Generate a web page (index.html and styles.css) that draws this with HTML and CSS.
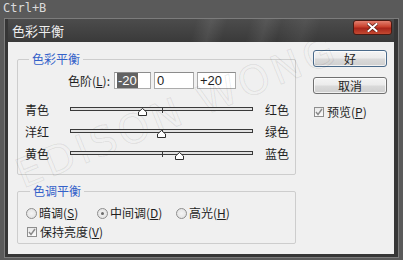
FILE: index.html
```html
<!DOCTYPE html>
<html>
<head>
    <title>色彩平衡</title>
    <link rel="stylesheet" href="styles.css">
</head>
<body>
    <div class="hotkey">Ctrl+B</div>

    <div class="dialog">
        <div class="titlebar">
            <span class="title">色彩平衡</span>
            <span class="close">
                <svg width="11" height="9" viewBox="0 0 11 9">
                    <path d="M1.5 1 L9.5 8 M9.5 1 L1.5 8" stroke="#5a1c12" stroke-width="3.4" stroke-linecap="square"/>
                    <path d="M1.5 1 L9.5 8 M9.5 1 L1.5 8" stroke="#ffffff" stroke-width="2" stroke-linecap="square"/>
                </svg>
            </span>
        </div>

        <div class="client">
            <div class="watermark">EDISON WONG</div>

            <div class="main">
                <fieldset class="group balance">
                    <legend>色彩平衡</legend>
                    <div class="levels">
                        <span class="levels-label">色阶(<u>L</u>):</span>
                        <span class="field field-a"><span class="sel">-20</span></span>
                        <span class="field field-b">0</span>
                        <span class="field field-c">+20</span>
                    </div>

                    <div class="slider-row">
                        <span class="from">青色</span>
                        <div class="track">
                            <span class="tick"></span>
                            <svg class="thumb" style="left: 40%" width="9" height="8" viewBox="0 0 9 8"><path d="M4.5 0.5 L8.5 4 L8.5 7.5 L0.5 7.5 L0.5 4 Z" fill="#fff" stroke="#2e2e2e"/></svg>
                        </div>
                        <span class="to">红色</span>
                    </div>
                    <div class="slider-row">
                        <span class="from">洋红</span>
                        <div class="track">
                            <span class="tick"></span>
                            <svg class="thumb" style="left: 50%" width="9" height="8" viewBox="0 0 9 8"><path d="M4.5 0.5 L8.5 4 L8.5 7.5 L0.5 7.5 L0.5 4 Z" fill="#fff" stroke="#2e2e2e"/></svg>
                        </div>
                        <span class="to">绿色</span>
                    </div>
                    <div class="slider-row">
                        <span class="from">黄色</span>
                        <div class="track">
                            <span class="tick"></span>
                            <svg class="thumb" style="left: 60%" width="9" height="8" viewBox="0 0 9 8"><path d="M4.5 0.5 L8.5 4 L8.5 7.5 L0.5 7.5 L0.5 4 Z" fill="#fff" stroke="#2e2e2e"/></svg>
                        </div>
                        <span class="to">蓝色</span>
                    </div>
                </fieldset>

                <fieldset class="group tone">
                    <legend>色调平衡</legend>
                    <div class="radios">
                        <span class="opt shadows"><span class="radio"></span>暗调(<u>S</u>)</span>
                        <span class="opt midtones"><span class="radio on"></span>中间调(<u>D</u>)</span>
                        <span class="opt"><span class="radio"></span>高光(<u>H</u>)</span>
                    </div>
                    <div class="opt keep">
                        <span class="checkbox">
                            <svg width="8" height="8" viewBox="0 0 8 8"><path d="M1 4 L3 6.5 L7 1" fill="none" stroke="#8a8a8a" stroke-width="1.4"/></svg>
                        </span>保持亮度(<u>V</u>)
                    </div>
                </fieldset>
            </div>

            <div class="side">
                <div class="button default">好</div>
                <div class="button">取消</div>
                <div class="opt preview">
                    <span class="checkbox">
                        <svg width="8" height="8" viewBox="0 0 8 8"><path d="M1 4 L3 6.5 L7 1" fill="none" stroke="#8a8a8a" stroke-width="1.4"/></svg>
                    </span>预览(<u>P</u>)
                </div>
            </div>
        </div>
    </div>
</body>
</html>
```

FILE: styles.css
```css
* {
    box-sizing: border-box;
}

body {
    margin: 0;
    width: 403px;
    height: 260px;
    overflow: hidden;
    background: #5a5a5a;
    font-family: "Liberation Sans", "Noto Sans CJK SC", sans-serif;
    font-size: 12px;
    color: #1f1f1f;
}

.hotkey {
    height: 18px;
    padding-left: 3px;
    font-family: "DejaVu Sans Mono", monospace;
    font-size: 12px;
    line-height: 17px;
    color: #dadada;
}

.dialog {
    margin-left: 4px;
    width: 395px;
    height: 240px;
    border: 1px solid #7c7c7c;
    background: #363636;
    padding: 0 4px 3px 3px;
    display: flex;
    flex-direction: column;
}

.titlebar {
    height: 23px;
    display: flex;
    justify-content: space-between;
    align-items: flex-start;
    background:
        linear-gradient(105deg, transparent 0, transparent 48%, rgba(255,255,255,0.08) 52%, transparent 56%,
            transparent 62%, rgba(255,255,255,0.07) 66%, transparent 70%, rgba(255,255,255,0.05) 76%, transparent 80%),
        linear-gradient(#4c4c4c, #3a3a3a);
}

.title {
    margin: 5px 0 0 4px;
    font-family: "Noto Sans CJK SC", sans-serif;
    font-size: 13px;
    line-height: 14px;
    color: #ededed;
}

.close {
    width: 39px;
    height: 15px;
    margin: 1px 2px 0 0;
    border: 1px solid #4a1a12;
    border-radius: 3px;
    background: linear-gradient(#e3806f, #c9412d 45%, #a9251a 55%, #c44a32);
    display: flex;
    align-items: center;
    justify-content: center;
}

.client {
    flex: 1;
    display: flex;
    position: relative;
    overflow: hidden;
    background: #f0f0f0;
    padding-left: 9px;
}

.watermark {
    position: absolute;
    left: 18px;
    top: 110px;
    font-family: "DejaVu Sans", sans-serif;
    font-size: 40px;
    line-height: 44px;
    letter-spacing: 4px;
    color: transparent;
    -webkit-text-stroke: 1.2px rgba(0, 0, 0, 0.07);
    transform: rotate(-22deg);
    transform-origin: left bottom;
    white-space: nowrap;
    pointer-events: none;
}

.main {
    width: 279px;
    padding-top: 10px;
}

.group {
    margin: 0;
    min-width: 0;
    border: 1px solid #cdcdcd;
    border-radius: 2px;
}

.group legend {
    padding: 0 3px;
    margin-left: 4px;
    font-family: "Noto Sans CJK SC", sans-serif;
    line-height: 14px;
    color: #3461c9;
}

.balance {
    height: 123px;
    padding: 6px 0 0 7px;
}

.levels {
    height: 17px;
    display: flex;
    align-items: center;
    margin-left: 43px;
}

.levels-label {
    width: 46px;
    font-family: "Noto Sans CJK SC", sans-serif;
}

.field {
    height: 17px;
    margin-right: 3px;
    padding-left: 2px;
    border: 1px solid #ababab;
    border-top-color: #8c8c8c;
    background: #fff;
    font-size: 13px;
    line-height: 15px;
}

.field-a { width: 37px; }
.field-b { width: 40px; }
.field-c { width: 39px; }

.sel {
    background: #626262;
    color: #fff;
    padding: 0 1px;
}

.slider-row {
    height: 22px;
    display: flex;
    align-items: center;
    white-space: nowrap;
}

.levels + .slider-row {
    margin-top: 9px;
}

.from {
    width: 45px;
    flex-shrink: 0;
    font-family: "Noto Sans CJK SC", sans-serif;
}

.to {
    margin-left: 12px;
    flex-shrink: 0;
    font-family: "Noto Sans CJK SC", sans-serif;
}

.track {
    position: relative;
    flex-shrink: 0;
    width: 183px;
    height: 4px;
    border: 1px solid #3a3a3a;
    background: #e2e2e2;
}

.tick {
    position: absolute;
    left: 50%;
    top: -1px;
    width: 1px;
    height: 6px;
    background: #3a3a3a;
}

.thumb {
    position: absolute;
    top: 0;
    margin-left: -5px;
}

.tone {
    height: 60px;
    margin-top: 9px;
    padding: 7px 7px 0 8px;
}

.radios {
    height: 16px;
    display: flex;
    align-items: center;
}

.opt {
    display: flex;
    align-items: center;
    white-space: nowrap;
    font-family: "Noto Sans CJK SC", sans-serif;
    line-height: 16px;
}

.shadows {
    width: 71px;
}

.midtones {
    width: 79px;
}

.radio {
    width: 11px;
    height: 11px;
    margin-right: 2px;
    border: 1px solid #8e8e8e;
    border-radius: 50%;
    background: radial-gradient(#f4f4f4, #dedede);
    display: flex;
    align-items: center;
    justify-content: center;
}

.radio.on::after {
    content: "";
    width: 3px;
    height: 3px;
    border-radius: 50%;
    background: #6a6a6a;
}

.keep {
    height: 16px;
    margin-top: 3px;
    margin-left: 1px;
}

.checkbox {
    width: 10px;
    height: 10px;
    margin-right: 3px;
    border: 1px solid #8e8e8e;
    background: linear-gradient(#e9e9e9, #fbfbfb);
    display: flex;
    align-items: center;
    justify-content: center;
}

.side {
    margin-left: 17px;
    padding-top: 8px;
    width: 74px;
}

.button {
    height: 17px;
    margin-bottom: 10px;
    border: 1px solid #707070;
    border-radius: 3px;
    background: linear-gradient(#f4f4f4, #ebebeb 48%, #dadada 52%, #cfcfcf);
    box-shadow: inset 0 0 0 1px rgba(255, 255, 255, 0.7);
    font-family: "Noto Sans CJK SC", sans-serif;
    text-align: center;
    line-height: 15px;
}

.button.default {
    border-color: #4a6a8a;
}

.preview {
    margin-top: 6px;
    margin-left: 1px;
}
```
